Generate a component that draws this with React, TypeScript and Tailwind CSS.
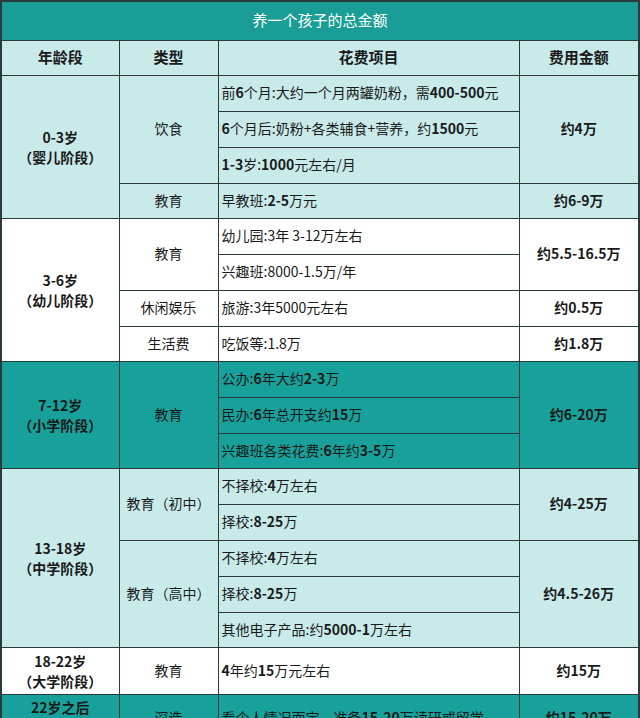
import React from "react";

type Group = { type: string; items: string[]; amount: string };
type Section = {
  age: string[];
  bg: "light" | "white" | "teal";
  bold: boolean;
  groups: Group[];
  tall?: boolean;
};

const sections: Section[] = [
  {
    age: ["0-3岁", "（婴儿阶段）"],
    bg: "light",
    bold: true,
    groups: [
      {
        type: "饮食",
        items: ["前6个月:大约一个月两罐奶粉，需400-500元", "6个月后:奶粉+各类辅食+营养，约1500元", "1-3岁:1000元左右/月"],
        amount: "约4万",
      },
      { type: "教育", items: ["早教班:2-5万元"], amount: "约6-9万" },
    ],
  },
  {
    age: ["3-6岁", "（幼儿阶段）"],
    bg: "white",
    bold: false,
    groups: [
      { type: "教育", items: ["幼儿园:3年 3-12万左右", "兴趣班:8000-1.5万/年"], amount: "约5.5-16.5万" },
      { type: "休闲娱乐", items: ["旅游:3年5000元左右"], amount: "约0.5万" },
      { type: "生活费", items: ["吃饭等:1.8万"], amount: "约1.8万" },
    ],
  },
  {
    age: ["7-12岁", "（小学阶段）"],
    bg: "teal",
    bold: true,
    groups: [
      {
        type: "教育",
        items: ["公办:6年大约2-3万", "民办:6年总开支约15万", "兴趣班各类花费:6年约3-5万"],
        amount: "约6-20万",
      },
    ],
  },
  {
    age: ["13-18岁", "（中学阶段）"],
    bg: "light",
    bold: true,
    groups: [
      { type: "教育（初中）", items: ["不择校:4万左右", "择校:8-25万"], amount: "约4-25万" },
      {
        type: "教育（高中）",
        items: ["不择校:4万左右", "择校:8-25万", "其他电子产品:约5000-1万左右"],
        amount: "约4.5-26万",
      },
    ],
  },
  {
    age: ["18-22岁", "（大学阶段）"],
    bg: "white",
    bold: true,
    tall: true,
    groups: [{ type: "教育", items: ["4年约15万元左右"], amount: "约15万" }],
  },
  {
    age: ["22岁之后", "（深造阶段）"],
    bg: "teal",
    bold: true,
    tall: true,
    groups: [{ type: "深造", items: ["看个人情况而定，准备15-20万读研或留学"], amount: "约15-20万" }],
  },
];

const bgClass = {
  light: "bg-[#c8ebea]",
  white: "bg-white",
  teal: "bg-[#18a19b]",
};

// wrap runs of digits in bold spans, like the original sheet
const renderItem = (text: string, bold: boolean) => {
  if (!bold) return text;
  return text.split(/([0-9][0-9\-.]*)/).map((part, i) =>
    /^[0-9]/.test(part) ? (
      <span key={i} className="font-bold">
        {part}
      </span>
    ) : (
      part
    )
  );
};

const cell = "border border-[#2b3a3a] align-middle leading-tight";

export default function App() {
  return (
    <div className="w-[640px] bg-white text-[#1a1a1a] font-['Noto_Sans_CJK_SC','Noto_Sans',sans-serif]">
      <table className="table-fixed border-collapse w-[638px] border-2 border-[#2b3a3a]">
        <colgroup>
          <col className="w-[118px]" />
          <col className="w-[99px]" />
          <col className="w-[301px]" />
          <col className="w-[120px]" />
        </colgroup>
        <tbody>
          <tr className="h-[39px] bg-[#1a9d96]">
            <td colSpan={4} className={`${cell} text-center text-white text-[15px]`}>
              养一个孩子的总金额
            </td>
          </tr>
          <tr className="h-[35px] bg-[#c8ebea] text-[15px] font-bold">
            <td className={`${cell} text-center`}>年龄段</td>
            <td className={`${cell} text-center`}>类型</td>
            <td className={`${cell} text-center`}>花费项目</td>
            <td className={`${cell} text-center`}>费用金额</td>
          </tr>
          {sections.map((sec, si) => {
            const total = sec.groups.reduce((n, g) => n + g.items.length, 0);
            const rows: React.ReactNode[] = [];
            let idx = 0;
            sec.groups.forEach((g, gi) => {
              g.items.forEach((item, ii) => {
                idx++;
                const h = sec.tall ? "h-[47px]" : idx === total ? "h-[35px]" : "h-[36px]";
                rows.push(
                  <tr key={`${si}-${gi}-${ii}`} className={`${bgClass[sec.bg]} ${h}`}>
                    {gi === 0 && ii === 0 && (
                      <td rowSpan={total} className={`${cell} text-center font-bold text-[14px] !leading-[20px]`}>
                        {sec.age.map((a) => (
                          <div key={a}>{a}</div>
                        ))}
                      </td>
                    )}
                    {ii === 0 && (
                      <td rowSpan={g.items.length} className={`${cell} text-center text-[14px]`}>
                        {g.type}
                      </td>
                    )}
                    <td className={`${cell} pl-[3px] text-[14px] whitespace-nowrap`}>{renderItem(item, sec.bold)}</td>
                    {ii === 0 && (
                      <td rowSpan={g.items.length} className={`${cell} text-center font-bold text-[14px]`}>
                        {g.amount}
                      </td>
                    )}
                  </tr>
                );
              });
            });
            return rows;
          })}
        </tbody>
      </table>
    </div>
  );
}
